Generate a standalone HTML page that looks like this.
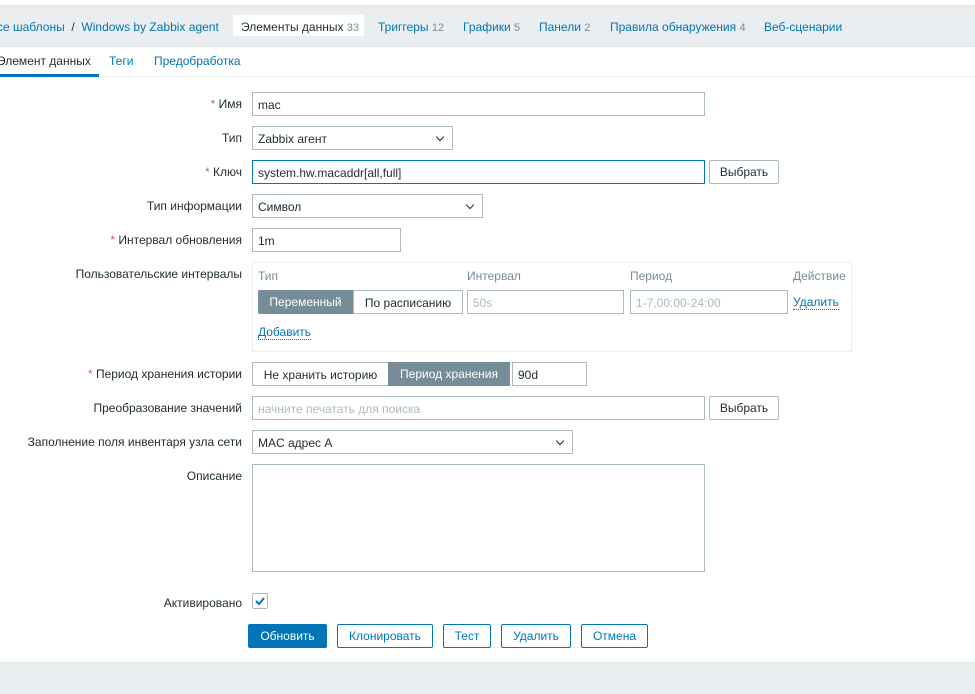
<!DOCTYPE html><html><head><meta charset="utf-8"><style>
body{margin:0;width:975px;height:693px;background:#fff;font-family:"Liberation Sans",Arial,sans-serif;font-size:12px;color:#1f2c33;position:relative;overflow:hidden}
.a{position:absolute}
.nav{left:0;top:5px;width:975px;height:40px;background:#ebeef0;border-top:1px solid #dfe4e7;border-bottom:1px solid #dfe4e7}
.nav span{position:absolute;top:14px;color:#0275b8;font-size:12px}
.nav .n{color:#768d99;font-size:11px}
.lbl{right:733px;text-align:right;white-space:nowrap}
.lbl b{color:#e45959;font-weight:normal}
.inp{border:1px solid #acbbc2;background:#fff;box-sizing:border-box;height:24px;padding:5px 5px;white-space:nowrap}
.sel:after{content:"";position:absolute;right:9px;top:7px;width:5px;height:5px;border-right:1.5px solid #1f2c33;border-bottom:1.5px solid #1f2c33;transform:rotate(45deg)}
.btn{border:1px solid #0275b8;color:#0275b8;background:#fff;box-sizing:border-box;height:24px;text-align:center;line-height:22px;border-radius:2px}
.ph{color:#acbbc2}
.g{color:#768d99}
.lnk{color:#0275b8;border-bottom:1px dotted #0275b8}
</style></head><body>
<div class="a nav">
<span style="left:-3px;color:#0275b8">се шаблоны <span style="position:static;color:#1f2c33">&nbsp;/&nbsp;</span> Windows by Zabbix agent</span>
<div class="a" style="left:233px;top:9px;width:131px;height:21px;background:#fff"></div>
<span style="left:241px;color:#1f2c33">Элементы данных <i class="n" style="font-style:normal">33</i></span>
<span style="left:378px">Триггеры <i class="n" style="font-style:normal">12</i></span>
<span style="left:463px">Графики <i class="n" style="font-style:normal">5</i></span>
<span style="left:539px">Панели <i class="n" style="font-style:normal">2</i></span>
<span style="left:610px">Правила обнаружения <i class="n" style="font-style:normal">4</i></span>
<span style="left:764px">Веб-сценарии</span>
</div>
<div class="a" style="left:0;top:76px;width:975px;height:1px;background:#ebeef0"></div>
<div class="a" style="left:-3px;top:54px">Элемент данных</div>
<div class="a" style="left:0;top:74px;width:99px;height:3px;background:#0275b8"></div>
<div class="a" style="left:109px;top:54px;color:#0275b8">Теги</div>
<div class="a" style="left:154px;top:54px;color:#0275b8">Предобработка</div>

<div class="a lbl" style="top:97px"><b>*</b> Имя</div>
<div class="a inp" style="left:252px;top:92px;width:453px">mac</div>
<div class="a lbl" style="top:131px">Тип</div>
<div class="a inp sel" style="left:252px;top:126px;width:201px">Zabbix агент</div>
<div class="a lbl" style="top:165px"><b>*</b> Ключ</div>
<div class="a inp" style="left:252px;top:160px;width:453px;border-color:#0275b8">system.hw.macaddr[all,full]</div>
<div class="a btn" style="left:709px;top:160px;width:70px;border-color:#acbbc2;color:#1f2c33">Выбрать</div>
<div class="a lbl" style="top:199px">Тип информации</div>
<div class="a inp sel" style="left:252px;top:194px;width:231px">Символ</div>
<div class="a lbl" style="top:233px"><b>*</b> Интервал обновления</div>
<div class="a inp" style="left:252px;top:228px;width:149px">1m</div>
<div class="a lbl" style="top:267px">Пользовательские интервалы</div>
<div class="a" style="left:252px;top:262px;width:598px;height:88px;border:1px solid #ebeef0"></div>
<div class="a g" style="left:258px;top:269px">Тип</div>
<div class="a g" style="left:467px;top:269px">Интервал</div>
<div class="a g" style="left:630px;top:269px">Период</div>
<div class="a g" style="left:793px;top:269px">Действие</div>
<div class="a" style="left:258px;top:290px;width:95px;height:24px;background:#768d99;color:#fff;text-align:center;line-height:24px;border-radius:2px 0 0 2px">Переменный</div>
<div class="a inp" style="left:353px;top:290px;width:110px;text-align:center">По расписанию</div>
<div class="a inp ph" style="left:467px;top:290px;width:157px">50s</div>
<div class="a inp ph" style="left:630px;top:290px;width:158px">1-7,00:00-24:00</div>
<div class="a lnk" style="left:793px;top:295px">Удалить</div>
<div class="a lnk" style="left:258px;top:325px">Добавить</div>
<div class="a lbl" style="top:367px"><b>*</b> Период хранения истории</div>
<div class="a inp" style="left:252px;top:362px;width:137px;text-align:center">Не хранить историю</div>
<div class="a" style="left:388px;top:362px;width:122px;height:24px;background:#768d99;color:#fff;text-align:center;line-height:24px">Период хранения</div>
<div class="a inp" style="left:512px;top:362px;width:75px">90d</div>
<div class="a lbl" style="top:401px">Преобразование значений</div>
<div class="a inp ph" style="left:252px;top:396px;width:453px">начните печатать для поиска</div>
<div class="a btn" style="left:709px;top:396px;width:70px;border-color:#acbbc2;color:#1f2c33">Выбрать</div>
<div class="a lbl" style="top:435px">Заполнение поля инвентаря узла сети</div>
<div class="a inp sel" style="left:252px;top:430px;width:321px">MAC адрес A</div>
<div class="a lbl" style="top:469px">Описание</div>
<div class="a inp" style="left:252px;top:464px;width:453px;height:108px"></div>
<div class="a lbl" style="top:596px">Активировано</div>
<div class="a" style="left:252px;top:593px;width:16px;height:16px;border:1px solid #acbbc2;box-sizing:border-box;border-radius:2px"><svg width="14" height="14" viewBox="0 0 14 14" style="position:absolute;left:0;top:0"><path d="M3 7l3 3 5-6" fill="none" stroke="#0275b8" stroke-width="2"/></svg></div>
<div class="a btn" style="left:248px;top:624px;width:79px;background:#0275b8;color:#fff">Обновить</div>
<div class="a btn" style="left:337px;top:624px;width:96px">Клонировать</div>
<div class="a btn" style="left:443px;top:624px;width:48px">Тест</div>
<div class="a btn" style="left:501px;top:624px;width:70px">Удалить</div>
<div class="a btn" style="left:581px;top:624px;width:67px">Отмена</div>
<div class="a" style="left:0;top:662px;width:975px;height:31px;background:#ebeef0;border-top:1px solid #dfe4e7"></div>
</body></html>
